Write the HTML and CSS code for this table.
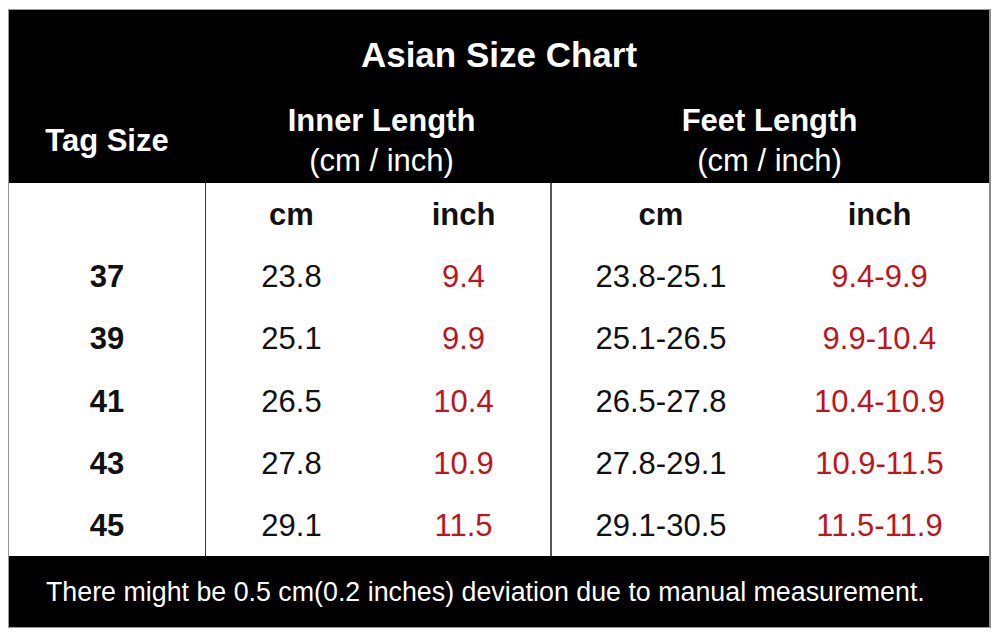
FILE: index.html
```html
<!DOCTYPE html>
<html lang="en">
<head>
<meta charset="utf-8">
<title>Asian Size Chart</title>
<link rel="stylesheet" href="styles.css">
</head>
<body>
<div class="chart">
  <div class="head">
    <div class="title">Asian Size Chart</div>
    <div class="tag">Tag Size</div>
    <div class="group inner"><span class="b">Inner Length</span><span>(cm / inch)</span></div>
    <div class="group feet"><span class="b">Feet Length</span><span>(cm / inch)</span></div>
  </div>
  <div class="body">
    <div class="c c1"></div><div class="c c2 b">cm</div><div class="c c3 b">inch</div><div class="c c4 b">cm</div><div class="c c5 b">inch</div>
    <div class="c c1 b">37</div><div class="c c2">23.8</div><div class="c c3 red">9.4</div><div class="c c4">23.8-25.1</div><div class="c c5 red">9.4-9.9</div>
    <div class="c c1 b">39</div><div class="c c2">25.1</div><div class="c c3 red">9.9</div><div class="c c4">25.1-26.5</div><div class="c c5 red">9.9-10.4</div>
    <div class="c c1 b">41</div><div class="c c2">26.5</div><div class="c c3 red">10.4</div><div class="c c4">26.5-27.8</div><div class="c c5 red">10.4-10.9</div>
    <div class="c c1 b">43</div><div class="c c2">27.8</div><div class="c c3 red">10.9</div><div class="c c4">27.8-29.1</div><div class="c c5 red">10.9-11.5</div>
    <div class="c c1 b">45</div><div class="c c2">29.1</div><div class="c c3 red">11.5</div><div class="c c4">29.1-30.5</div><div class="c c5 red">11.5-11.9</div>
  </div>
  <div class="foot">There might be 0.5 cm(0.2 inches) deviation due to manual measurement.</div>
</div>
</body>
</html>
```
FILE: styles.css
```css
html, body {
  margin: 0;
  padding: 0;
  background: #fff;
}
body {
  padding: 9px 0 0 8px;
  font-family: "Liberation Sans", Arial, sans-serif;
}
.chart {
  width: 980px;
  border: 1px solid #9a9a9a;
  border-right: 2px solid #8a8a8a;
  box-sizing: content-box;
}
.head {
  background: #000;
  color: #fff;
  display: grid;
  grid-template-columns: 196px 172px 173px 220px 219px;
  grid-template-rows: 90px 83px;
}
.title {
  grid-column: 1 / 6;
  display: flex;
  align-items: center;
  justify-content: center;
  font-weight: bold;
  font-size: 35px;
}
.tag {
  grid-column: 1;
  font-weight: bold;
  font-size: 31px;
  line-height: 40px;
  text-align: center;
  padding-top: 21px;
}
.group {
  display: flex;
  flex-direction: column;
  align-items: center;
  font-size: 31px;
  line-height: 40px;
  padding-top: 1px;
}
.inner { grid-column: 2 / 4; padding-left: 8px; }
.feet { grid-column: 4 / 6; }
.b { font-weight: bold; }
.body {
  display: grid;
  grid-template-columns: 196px 172px 173px 220px 219px;
  grid-auto-rows: 62.17px;
  background: #fff;
  color: #111;
}
.c {
  display: flex;
  align-items: center;
  justify-content: center;
  font-size: 31px;
  padding-top: 2px;
  box-sizing: border-box;
}
.c2 { border-left: 1px solid #3a3a3a; }
.c4 { border-left: 2px solid #555; }
.red { color: #c0141c; }
.foot {
  background: #000;
  color: #fff;
  height: 71px;
  display: flex;
  align-items: center;
  padding-left: 37px;
  padding-top: 3px;
  box-sizing: border-box;
  font-size: 26.8px;
}
```
